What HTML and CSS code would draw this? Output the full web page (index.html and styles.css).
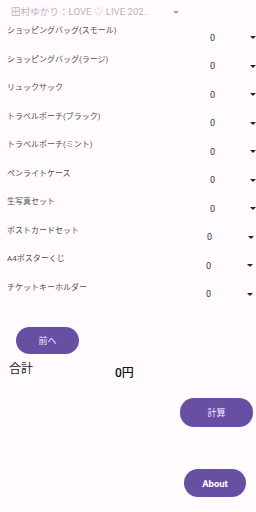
FILE: index.html
```html
<!DOCTYPE html>
<html lang="ja">
<head>
<meta charset="utf-8">
<link rel="stylesheet" href="styles.css">
</head>
<body>
<div class="app">
  <div class="header">
    <span class="header-text">田村ゆかり：LOVE ♡ LIVE 202..</span>
    <span class="tri tri-gray"></span>
  </div>
  <div class="rows">
    <div class="row"><div class="label">ショッピングバッグ(スモール)</div><div class="picker"><span class="val">0</span><span class="tri"></span></div></div>
    <div class="row"><div class="label">ショッピングバッグ(ラージ)</div><div class="picker"><span class="val">0</span><span class="tri"></span></div></div>
    <div class="row"><div class="label">リュックサック</div><div class="picker"><span class="val">0</span><span class="tri"></span></div></div>
    <div class="row"><div class="label">トラベルポーチ(ブラック)</div><div class="picker"><span class="val">0</span><span class="tri"></span></div></div>
    <div class="row"><div class="label">トラベルポーチ(ミント)</div><div class="picker"><span class="val">0</span><span class="tri"></span></div></div>
    <div class="row"><div class="label">ペンライトケース</div><div class="picker"><span class="val">0</span><span class="tri"></span></div></div>
    <div class="row"><div class="label">生写真セット</div><div class="picker"><span class="val">0</span><span class="tri"></span></div></div>
    <div class="row"><div class="label">ポストカードセット</div><div class="picker picker-s1"><span class="val">0</span><span class="tri"></span></div></div>
    <div class="row"><div class="label">A4ポスターくじ</div><div class="picker picker-s2"><span class="val">0</span><span class="tri"></span></div></div>
    <div class="row"><div class="label">チケットキーホルダー</div><div class="picker picker-s2"><span class="val">0</span><span class="tri"></span></div></div>
  </div>
  <button class="btn btn-prev">前へ</button>
  <div class="total">
    <span class="total-label">合計</span>
    <span class="total-value">0円</span>
  </div>
  <div class="calc-wrap"><button class="btn btn-calc">計算</button></div>
  <div class="about-wrap"><button class="btn btn-about">About</button></div>
</div>
</body>
</html>
```
FILE: styles.css
```css
html, body {
  margin: 0;
  padding: 0;
  background: #fffbfe;
}
body {
  font-family: Roboto, "Noto Sans CJK JP", sans-serif;
  width: 256px;
  height: 512px;
  overflow: hidden;
}
.app {
  display: flex;
  flex-direction: column;
}
.header {
  height: 26px;
  display: flex;
  align-items: flex-start;
  padding-left: 11px;
  box-sizing: border-box;
}
.header-text {
  font-size: 9.6px;
  line-height: 14px;
  margin-top: 5px;
  color: #b8b4b8;
  width: 162px;
  flex-shrink: 0;
  white-space: nowrap;
}
.tri {
  display: inline-block;
  width: 0;
  height: 0;
  border-left: 3px solid transparent;
  border-right: 3px solid transparent;
  border-top: 3px solid #222;
}
.tri-gray {
  border-top: 3px solid #a8a4a8;
  margin-top: 10.5px;
}
.rows {
  display: flex;
  flex-direction: column;
}
.row {
  height: 28.5px;
  display: flex;
  flex-direction: column;
}
.label {
  font-size: 8px;
  line-height: 10px;
  color: #504d52;
  padding-left: 7px;
  white-space: nowrap;
}
.picker {
  display: flex;
  align-items: center;
  height: 10px;
  margin-top: -3.5px;
  padding-left: 210px;
}
.picker-s1 { padding-left: 207px; }
.picker-s2 { padding-left: 206px; }
.val {
  font-size: 9px;
  line-height: 10px;
  color: #333;
  width: 41px;
}
.btn {
  border: none;
  background: #6750a4;
  color: #f2ecf8;
  font-family: Roboto, "Noto Sans CJK JP", sans-serif;
  font-size: 9px;
  border-radius: 14px;
  padding: 0;
  cursor: pointer;
}
.btn-prev {
  width: 63px;
  height: 27px;
  margin-top: 16px;
  margin-left: 16px;
  align-self: flex-start;
}
.total {
  display: flex;
  align-items: flex-start;
  margin-top: 8px;
  height: 36px;
}
.total-label {
  font-size: 12px;
  line-height: 14px;
  color: #222;
  margin-left: 9px;
  width: 106px;
}
.total-value {
  font-size: 12px;
  line-height: 14px;
  font-weight: 500;
  color: #111;
  margin-top: 4px;
}
.calc-wrap {
  display: flex;
  justify-content: flex-end;
  padding-right: 3px;
}
.btn-calc {
  width: 73px;
  height: 29px;
}
.about-wrap {
  display: flex;
  justify-content: flex-end;
  padding-right: 10px;
  margin-top: 42px;
}
.btn-about {
  width: 62px;
  height: 28px;
  font-weight: 700;
  font-size: 9.5px;
  color: #fff;
}
```
